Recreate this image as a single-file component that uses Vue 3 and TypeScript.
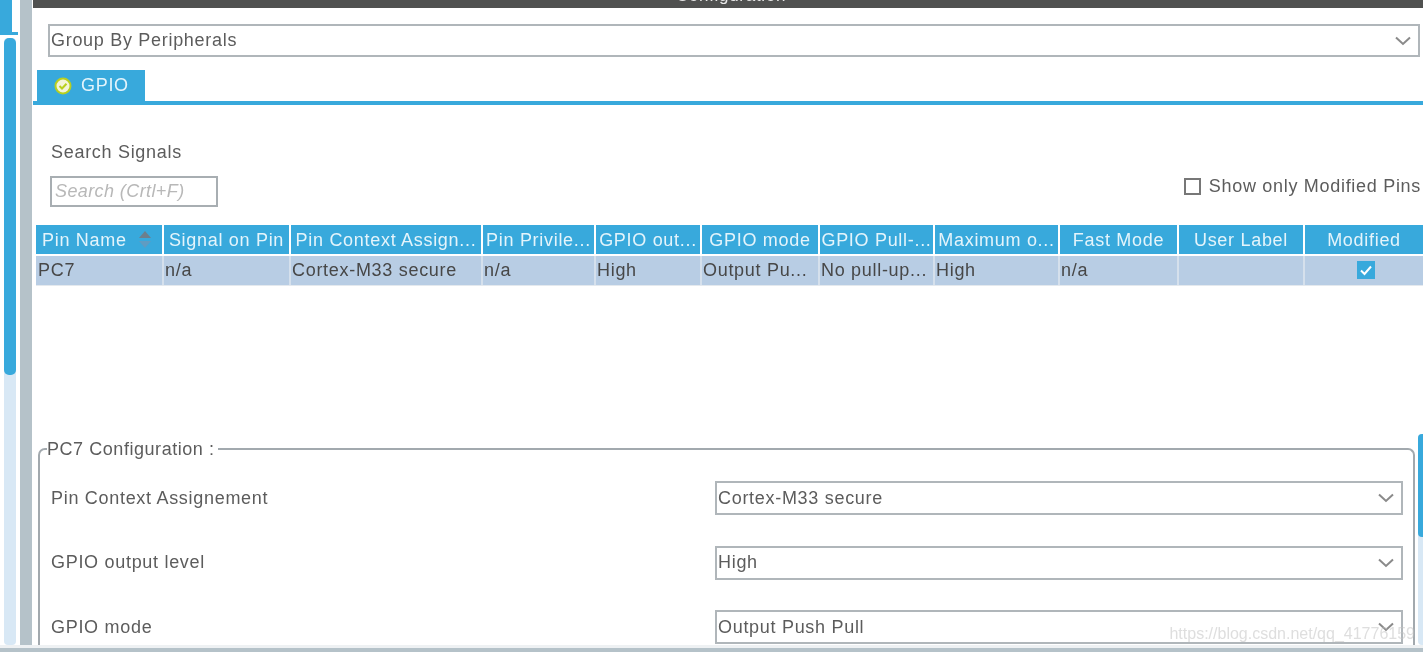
<script setup lang="ts">
interface Column {
	title: string,
	value: string,
	width: number,
}

const columns: Column[] = [
	{ title: 'Pin Name', value: 'PC7', width: 128 },
	{ title: 'Signal on Pin', value: 'n/a', width: 127 },
	{ title: 'Pin Context Assign...', value: 'Cortex-M33 secure', width: 192 },
	{ title: 'Pin Privile...', value: 'n/a', width: 113 },
	{ title: 'GPIO out...', value: 'High', width: 106 },
	{ title: 'GPIO mode', value: 'Output Pu...', width: 118 },
	{ title: 'GPIO Pull-...', value: 'No pull-up...', width: 115 },
	{ title: 'Maximum o...', value: 'High', width: 125 },
	{ title: 'Fast Mode', value: 'n/a', width: 119 },
	{ title: 'User Label', value: '', width: 126 },
	{ title: 'Modified', value: '', width: 118 },
];

const gridColumns = columns.map(c => `${c.width}px`).join(' ');

const configRows = [
	{ label: 'Pin Context Assignement', value: 'Cortex-M33 secure' },
	{ label: 'GPIO output level', value: 'High' },
	{ label: 'GPIO mode', value: 'Output Push Pull' },
];
</script>

<template>
	<div class="page">
		<div class="workspace">
			<aside class="side">
				<div class="side-tab"></div>
				<div class="side-track"><div class="side-thumb"></div></div>
			</aside>
			<div class="gutter"></div>
			<main class="main">
				<header class="title-bar"><span>Configuration</span></header>

				<div class="select group-select">
					<span>Group By Peripherals</span>
					<svg class="chevron" width="18" height="10" viewBox="0 0 18 10"><path d="M2 1.5 9 8l7-6.5" /></svg>
				</div>

				<div class="tabs">
					<div class="tab">
						<svg width="18" height="18" viewBox="0 0 18 18">
							<circle cx="9" cy="9" r="7.5" fill="#f4f4d8" stroke="#b9cf1e" stroke-width="2" />
							<path d="M5.5 9 8 11.5 12.5 6.8" fill="none" stroke="#b9cf1e" stroke-width="2" />
						</svg>
						<span>GPIO</span>
					</div>
				</div>

				<section class="search-row">
					<div>
						<div class="search-label">Search Signals</div>
						<div class="search-input">Search (Crtl+F)</div>
					</div>
					<label class="modified-toggle">
						<span class="empty-box"></span>
						<span>Show only Modified Pins</span>
					</label>
				</section>

				<div class="pin-table" :style="{ gridTemplateColumns: gridColumns }">
					<div
						v-for="(col, index) in columns"
						:key="col.title"
						class="head-cell"
					>
						<span>{{ col.title }}</span>
						<svg v-if="index === 0" class="sort" width="14" height="20" viewBox="0 0 14 20">
							<path d="M7 1 13 8H1z" fill="#6d7f8c" />
							<path d="M1 11h12l-6 7z" fill="#5f9cc2" />
						</svg>
					</div>
					<div v-for="col in columns" :key="`v-${col.title}`" class="body-cell">
						<span v-if="col.title !== 'Modified'">{{ col.value }}</span>
						<span v-else class="checked">
							<svg width="18" height="18" viewBox="0 0 18 18">
								<path d="M4 9.5 7.5 13 14 5.5" fill="none" stroke="#fff" stroke-width="2" />
							</svg>
						</span>
					</div>
				</div>

				<div class="lower">
					<fieldset class="config">
						<legend>PC7 Configuration :</legend>
						<div v-for="row in configRows" :key="row.label" class="config-row">
							<span class="config-label">{{ row.label }}</span>
							<div class="select config-select">
								<span>{{ row.value }}</span>
								<svg class="chevron" width="18" height="10" viewBox="0 0 18 10"><path d="M2 1.5 9 8l7-6.5" /></svg>
							</div>
						</div>
					</fieldset>
					<div class="lower-track"><div class="lower-thumb"></div></div>
				</div>
			</main>
		</div>
		<div class="bottom-band"></div>
		<div class="watermark">https://blog.csdn.net/qq_41776159</div>
	</div>
</template>

<style>
html, body {
	margin: 0;
	background: #fff;
}
</style>

<style scoped>
.page {
	position: relative;
	width: 1423px;
	height: 652px;
	overflow: hidden;
	display: flex;
	flex-direction: column;
	font-family: "Liberation Sans", Arial, sans-serif;
	font-size: 18px;
	letter-spacing: 0.7px;
	color: #5c5c5c;
	background: #fff;
	filter: blur(0.4px);
}

.workspace {
	flex: 1;
	min-height: 0;
	display: flex;
}

.side {
	width: 20px;
	flex: none;
	display: flex;
	flex-direction: column;
}

.side-tab {
	width: 18px;
	height: 35px;
	flex: none;
	background:
		linear-gradient(#38a9dc, #38a9dc) left top / 12px 100% no-repeat,
		linear-gradient(#38a9dc, #38a9dc) left bottom / 100% 3px no-repeat;
}

.side-track {
	flex: 1;
	margin: 3px 4px 0;
	background: #d8e8f5;
	border-radius: 4px;
}

.side-thumb {
	height: 337px;
	background: #38a9dc;
	border-radius: 5px;
}

.gutter {
	width: 12px;
	flex: none;
	background: #b5c2c9;
}

.main {
	flex: 1;
	min-width: 0;
	display: flex;
	flex-direction: column;
	padding-left: 1px;
}

.title-bar {
	height: 8px;
	flex: none;
	background: #505150;
	color: #e8e8e8;
	text-align: center;
	overflow: hidden;
	position: relative;
}

.title-bar span {
	position: absolute;
	left: 6px;
	right: 0;
	top: -14px;
	font-size: 17px;
}

.select {
	display: flex;
	align-items: center;
	justify-content: space-between;
	box-sizing: border-box;
	height: 34px;
	border: 2px solid #b0b6ba;
	padding: 0 6px 0 1px;
	background: #fff;
}

.chevron path {
	fill: none;
	stroke: #8a8a8a;
	stroke-width: 2;
}

.group-select {
	height: 33px;
	margin: 16px 3px 0 15px;
	flex: none;
}

.tabs {
	margin-top: 13px;
	height: 31px;
	flex: none;
	padding-left: 4px;
	border-bottom: 4px solid #38a9dc;
}

.tab {
	width: 108px;
	height: 31px;
	background: #38a9dc;
	color: #e4f4fb;
	display: flex;
	align-items: center;
	gap: 9px;
	padding-left: 17px;
	box-sizing: border-box;
}

.search-row {
	display: flex;
	justify-content: space-between;
	padding: 35px 2px 0 17px;
	height: 120px;
	box-sizing: border-box;
	flex: none;
}

.search-label {
	line-height: 24px;
	margin-left: 1px;
}

.search-input {
	width: 168px;
	height: 31px;
	box-sizing: border-box;
	margin-top: 12px;
	border: 2px solid #a8aeb2;
	padding-left: 3px;
	line-height: 26px;
	font-style: italic;
	color: #b8b8b8;
	letter-spacing: 0.4px;
}

.modified-toggle {
	display: flex;
	align-items: center;
	gap: 8px;
	height: 24px;
	margin-top: 34px;
}

.empty-box {
	width: 17px;
	height: 17px;
	box-sizing: border-box;
	border: 2px solid #777;
}

.pin-table {
	display: grid;
	margin-left: 3px;
	flex: none;
	border-bottom: 1px solid #e4e9ee;
}

.head-cell {
	height: 31px;
	box-sizing: border-box;
	background: #38a9dc;
	background-clip: padding-box;
	border-right: 2px solid #fff;
	border-bottom: 2px solid #fff;
	color: #e4f4fb;
	padding-top: 1px;
	white-space: nowrap;
	overflow: hidden;
	display: flex;
	align-items: center;
	justify-content: center;
}

.head-cell:first-of-type {
	justify-content: space-between;
	padding-left: 6px;
}

.head-cell:nth-child(11) {
	border-right: 0;
}

.sort {
	margin-right: 10px;
}

.body-cell {
	height: 29px;
	background: #b8cde4;
	border-right: 2px solid #d5e0ec;
	box-sizing: border-box;
	padding-left: 1px;
	line-height: 28px;
	color: #474747;
	white-space: nowrap;
	overflow: hidden;
}

.body-cell:nth-child(12) {
	padding-left: 2px;
}

.body-cell:last-child {
	border-right: 0;
	display: flex;
	justify-content: center;
	align-items: center;
	padding: 0 0 2px 4px;
}

.checked {
	width: 18px;
	height: 18px;
	background: #38a9dc;
	display: block;
}

.checked svg {
	display: block;
}

.lower {
	flex: 1;
	min-height: 0;
	margin-top: 150px;
	display: flex;
	align-items: stretch;
}

.config {
	flex: 1;
	min-width: 0;
	margin: 0 3px 0 5px;
	padding: 0 10px;
	border: 2px solid #a2a9ae;
	border-bottom: 0;
	border-radius: 7px 7px 0 0;
	display: flex;
	flex-direction: column;
	min-inline-size: 0;
}

.config legend {
	padding: 0 3px 0 0;
	margin-left: -3px;
	line-height: 26px;
	letter-spacing: 0.55px;
}

.config-row {
	display: flex;
	align-items: center;
	justify-content: space-between;
	height: 34px;
	margin-top: 30.5px;
	flex: none;
}

.config-row:first-of-type {
	margin-top: 19px;
}

.config-label {
	padding-left: 1px;
	white-space: nowrap;
}

.config-select {
	width: 688px;
}

.lower-track {
	width: 5px;
	flex: none;
	margin-top: -2px;
	background: #d8e8f5;
	border-radius: 4px 0 0 4px;
}

.lower-thumb {
	height: 103px;
	background: #38a9dc;
	border-radius: 4px 0 0 4px;
}

.bottom-band {
	height: 7px;
	flex: none;
	background: linear-gradient(#eef1f3 0 3px, #b5c2c9 3px);
}

.watermark {
	position: absolute;
	right: 8px;
	bottom: 9px;
	font-size: 16px;
	letter-spacing: 0;
	color: rgba(195, 195, 195, 0.55);
}
</style>
